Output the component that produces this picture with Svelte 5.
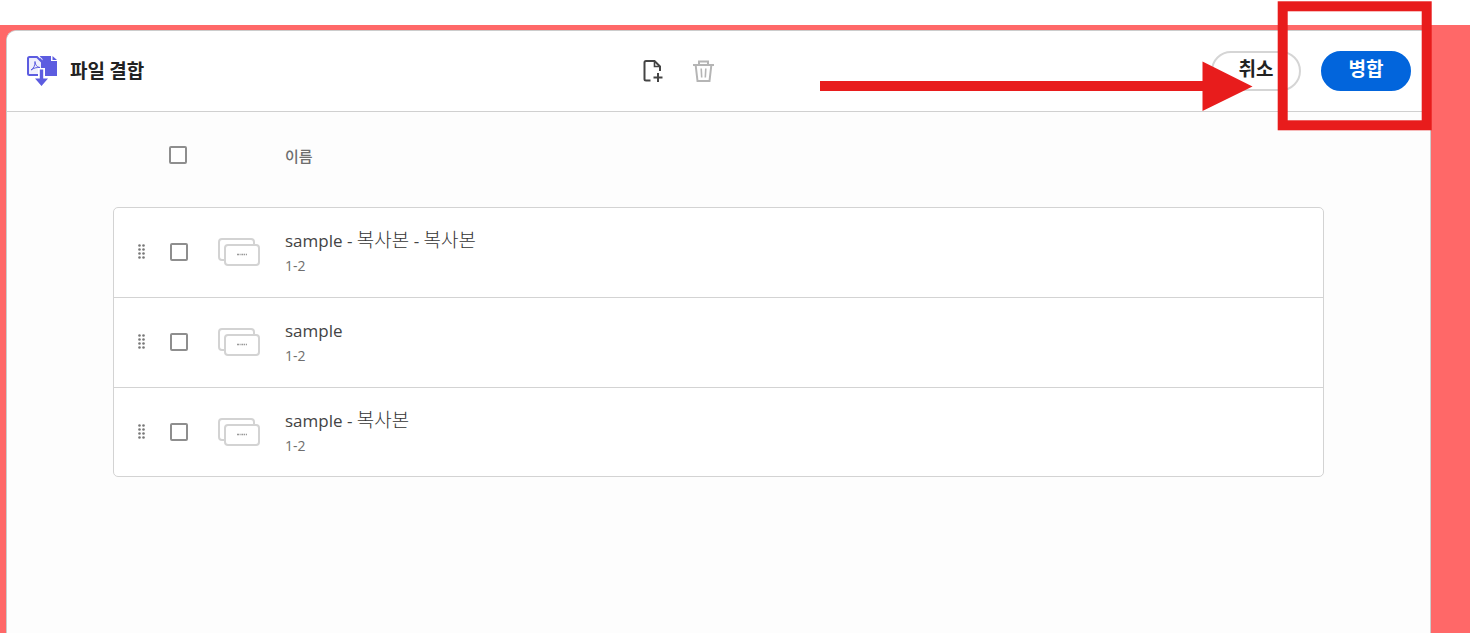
<script lang="ts">
  let files = $state([
    { id: 1, name: 'sample - 복사본 - 복사본', pages: '1-2', checked: false },
    { id: 2, name: 'sample', pages: '1-2', checked: false },
    { id: 3, name: 'sample - 복사본', pages: '1-2', checked: false },
  ])

  let allChecked = $derived(files.length > 0 && files.every((f) => f.checked))

  function toggleAll() {
    const next = !allChecked
    files.forEach((f) => (f.checked = next))
  }

  function removeChecked() {
    files = files.filter((f) => !f.checked)
  }

  // odd entries are the hangul runs, they get their own font size
  function splitHangul(name: string) {
    return name.split(/([가-힣]+)/)
  }
</script>

<div class="page">
  <div class="backdrop">
    <main class="panel">
      <header class="topbar">
        <div class="brand">
          <svg width="32" height="32" viewBox="0 0 32 32" aria-hidden="true">
            <path d="M14 1h11v5h6v15H14z" fill="#5c5ce0" />
            <path d="M26.500 1L31 5h-4.500z" fill="#5c5ce0" />
            <path d="M3.500 2H11l5 5v13H3.500A1.500 1.500 0 0 1 2 18.500v-15A1.500 1.500 0 0 1 3.500 2z" fill="#eeeefc" stroke="#5c5ce0" stroke-width="2" />
            <path d="M12.500 1h1l3 3v1.500z" fill="#eeeefc" />
            <path d="M9 6.500c.5 4 2 5.500 5 6-4-.2-6 .5-9 2.500 3-2 4-4.500 4-8.500z" fill="none" stroke="#5c5ce0" stroke-width="1" />
            <path d="M12 13h7v9h5L15.500 32 7 22h5z" fill="#fff" />
            <path d="M13.800 14.500h3.400v9H22L15.500 31 9 23.500h4.800z" fill="#5c5ce0" />
          </svg>
          <h1>파일 결합</h1>
        </div>

        <div class="tools">
          <button class="tool" aria-label="파일 추가">
            <svg width="24" height="24" viewBox="0 0 24 24" fill="none" stroke="#444" stroke-width="2">
              <path d="M10.500 21.500H6A1.500 1.500 0 0 1 4.500 20V3.500A1.500 1.500 0 0 1 6 2h8.500L20 7.500V12" />
              <path d="M14.500 2v5.500H20" stroke-width="1.600" />
              <path d="M18 14v9M13.500 18.500h9" />
            </svg>
          </button>
          <button class="tool" aria-label="삭제" onclick={removeChecked}>
            <svg width="24" height="24" viewBox="0 0 24 24" fill="none" stroke="#b5b5b5" stroke-width="2">
              <path d="M2 6h21M8 5.500V2.500h9v3" />
              <path d="M4.700 6.500L6.500 22h12l1.800-15.500" />
              <path d="M10.200 9.500l.5 9M14.800 9.500l-.5 9" stroke-width="1.600" />
            </svg>
          </button>
        </div>

        <div class="actions">
          <button class="btn">취소</button>
          <button class="btn primary">병합</button>
        </div>
      </header>

      <section class="content">
        <div class="list-head">
          <span></span>
          <input type="checkbox" aria-label="모두 선택" checked={allChecked} onchange={toggleAll} />
          <span></span>
          <span class="label">이름</span>
        </div>

        <ul class="files">
          {#each files as file (file.id)}
            <li>
              <svg class="grip" width="8" height="16" viewBox="0 0 8 16" fill="#777" aria-hidden="true">
                {#each [1.5, 5.5, 9.5, 13.5] as y}
                  <circle cx="1.500" cy={y} r="1.300" />
                  <circle cx="5.500" cy={y} r="1.300" />
                {/each}
              </svg>
              <input id="file-{file.id}" type="checkbox" bind:checked={file.checked} />
              <svg class="thumb" width="42" height="28" viewBox="0 0 42 28" fill="#fff" stroke="#d3d3d3" stroke-width="2" aria-hidden="true">
                <rect x="1" y="1" width="35" height="21" rx="3" />
                <rect x="7" y="7" width="34" height="20" rx="3" />
                <path d="M19 16.500h10" stroke="#999" stroke-width="1.500" stroke-dasharray="2 .6 1 .8" />
              </svg>
              <label for="file-{file.id}">
                <span class="name">
                  {#each splitHangul(file.name) as part, i}{#if i % 2}<span class="hangul">{part}</span>{:else}{part}{/if}{/each}
                </span>
                <span class="pages">{file.pages}</span>
              </label>
            </li>
          {/each}
        </ul>
      </section>
    </main>
  </div>

  <svg class="callout" width="612" height="132" viewBox="0 0 612 132" aria-hidden="true">
    <path d="M0 81h382.500V61.500l50 25-50 24.500V91H0z" fill="#e81c1c" />
    <rect x="462.700" y="6.300" width="144" height="119" fill="none" stroke="#e81c1c" stroke-width="10" />
  </svg>
</div>

<style>
  :global(body) {
    margin: 0;
    background: #fff;
  }

  .page {
    position: relative;
    box-sizing: border-box;
    min-height: 100vh;
    padding-top: 25px;
    display: flex;
    flex-direction: column;
    font-family: 'Noto Sans CJK KR', sans-serif;
    color: #222;
  }

  .backdrop {
    flex: 1;
    display: flex;
    padding: 5px 39px 0 6px;
    background: #ff6868;
  }

  .panel {
    flex: 1;
    border: 1px solid #ccc;
    border-bottom: 0;
    border-radius: 10px 0 0 0;
    background: #fdfdfd;
    overflow: hidden;
  }

  .topbar {
    display: flex;
    align-items: center;
    justify-content: space-between;
    height: 80px;
    padding: 0 19px;
    border-bottom: 1px solid #d0d0d0;
    background: #fff;
  }

  .brand {
    display: flex;
    align-items: center;
    gap: 12px;
  }

  h1 {
    margin: 0;
    padding-bottom: 2px;
    font-size: 19px;
    line-height: 24px;
    font-weight: 700;
  }

  .tools {
    display: flex;
    gap: 27px;
  }

  .tool {
    display: flex;
    padding: 0;
    border: 0;
    background: none;
    cursor: pointer;
  }

  .actions {
    display: flex;
    gap: 20px;
  }

  .btn {
    box-sizing: border-box;
    width: 90px;
    height: 40px;
    padding: 0 0 6px;
    border: 2px solid #d5d5d5;
    border-radius: 20px;
    background: #fff;
    color: #222;
    font-family: inherit;
    font-size: 19px;
    line-height: 24px;
    font-weight: 700;
    cursor: pointer;
  }

  .primary {
    border-color: #0265dc;
    background: #0265dc;
    color: #fff;
  }

  .content {
    padding: 0 106px;
  }

  .list-head,
  li {
    display: grid;
    grid-template-columns: 32px 48px 67px 1fr;
    align-items: center;
    padding-left: 24px;
  }

  .list-head {
    height: 86px;
    margin-bottom: 9px;
  }

  .label {
    padding: 2px 0 0 1px;
    font-size: 15px;
    line-height: 20px;
    font-weight: 500;
    color: #6e6e6e;
  }

  input {
    appearance: none;
    box-sizing: border-box;
    width: 18px;
    height: 18px;
    margin: 0;
    border: 2px solid #8e8e8e;
    border-radius: 2px;
    background: #fff;
  }

  input:checked {
    background: #8e8e8e;
  }

  .files {
    margin: 0;
    padding: 0;
    list-style: none;
    border: 1px solid #d3d3d3;
    border-radius: 5px;
    background: #fff;
  }

  li {
    height: 88px;
    padding-bottom: 1px;
  }

  li:last-child {
    height: 88px;
    padding-bottom: 0;
  }

  li + li {
    border-top: 1px solid #d3d3d3;
  }

  .grip {
    cursor: grab;
  }

  label {
    display: flex;
    flex-direction: column;
    padding-top: 2px;
  }

  .name {
    font-family: 'Open Sans', sans-serif;
    font-size: 17px;
    line-height: 26px;
    color: #444;
  }

  .hangul {
    font-family: 'Noto Sans CJK KR', sans-serif;
    font-size: 19px;
    line-height: 20px;
    font-weight: 300;
    color: #333;
  }

  .pages {
    font-family: 'Open Sans', sans-serif;
    font-size: 14px;
    line-height: 24px;
    color: #6e6e6e;
  }

  .callout {
    position: absolute;
    top: 0;
    right: 38px;
    pointer-events: none;
  }
</style>
